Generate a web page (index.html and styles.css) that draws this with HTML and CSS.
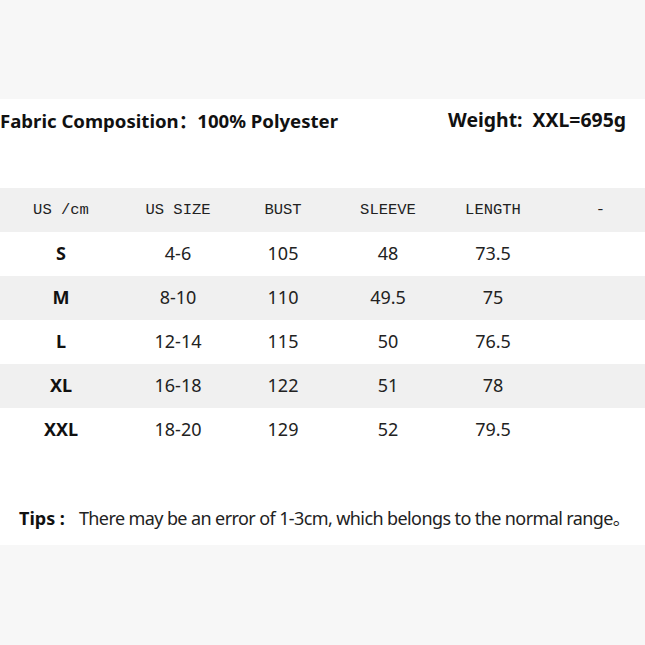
FILE: index.html
```html
<!DOCTYPE html>
<html lang="en">
<head>
<meta charset="utf-8">
<title>Size Chart</title>
<link rel="stylesheet" href="styles.css">
</head>
<body>
<main class="sheet">
  <section class="info">
    <p class="info-item">Fabric Composition：100% Polyester</p>
    <p class="info-item info-weight"><span class="info-key">Weight:</span>XXL=695g</p>
  </section>
  <section class="chart">
    <div class="row head">
      <span>US /cm</span><span>US SIZE</span><span>BUST</span><span>SLEEVE</span><span>LENGTH</span><span class="dash">-</span>
    </div>
    <div class="row">
      <span class="size">S</span><span>4-6</span><span>105</span><span>48</span><span>73.5</span><span></span>
    </div>
    <div class="row shade">
      <span class="size">M</span><span>8-10</span><span>110</span><span>49.5</span><span>75</span><span></span>
    </div>
    <div class="row">
      <span class="size">L</span><span>12-14</span><span>115</span><span>50</span><span>76.5</span><span></span>
    </div>
    <div class="row shade">
      <span class="size">XL</span><span>16-18</span><span>122</span><span>51</span><span>78</span><span></span>
    </div>
    <div class="row">
      <span class="size">XXL</span><span>18-20</span><span>129</span><span>52</span><span>79.5</span><span></span>
    </div>
  </section>
  <p class="tips"><b class="tips-label">Tips :</b><span class="tips-text">There may be an error of 1-3cm, which belongs to the normal range。</span></p>
</main>
</body>
</html>
```

FILE: styles.css
```css
html, body {
  margin: 0;
  padding: 0;
}
body {
  background: #f7f7f7;
  width: 645px;
  height: 645px;
  overflow: hidden;
}
.sheet {
  margin-top: 99px;
  height: 446px;
  background: #ffffff;
  display: flex;
  flex-direction: column;
}
.info {
  display: flex;
  justify-content: space-between;
  align-items: center;
  box-sizing: border-box;
  height: 42px;
  padding: 0 19px 2px 0;
}
.info-item {
  margin: 0;
  font-family: "Noto Sans", "Noto Sans CJK SC", sans-serif;
  font-weight: 700;
  font-size: 18.6px;
  color: #111;
  white-space: pre;
}
.info-weight {
  font-size: 19.4px;
}
.info-key {
  margin-right: 10px;
}
.chart {
  margin-top: 47px;
  display: flex;
  flex-direction: column;
}
.row {
  display: grid;
  grid-template-columns: 122px 112px 98px 112px 98px 103px;
  height: 44px;
  align-items: center;
  justify-items: center;
  box-sizing: border-box;
  padding-bottom: 3px;
  font-family: "Noto Sans", "Open Sans", sans-serif;
  font-size: 18px;
  color: #222;
}
.row.head, .row.shade {
  background: #f0f0f0;
}
.row.head {
  padding-bottom: 0;
  font-family: "Liberation Mono", "Noto Sans CJK SC", monospace;
  font-size: 15.5px;
  color: #222;
}
.row.head .dash {
  padding-left: 14px;
}
.size {
  font-weight: 700;
  color: #111;
}
.tips {
  margin: 52px 0 0 19px;
  display: flex;
  align-items: baseline;
  gap: 14px;
  font-family: "Noto Sans", "Noto Sans CJK SC", sans-serif;
  font-size: 18px;
  color: #222;
}
.tips-label {
  font-weight: 700;
  color: #111;
}
.tips-text {
  letter-spacing: -0.6px;
}
```
